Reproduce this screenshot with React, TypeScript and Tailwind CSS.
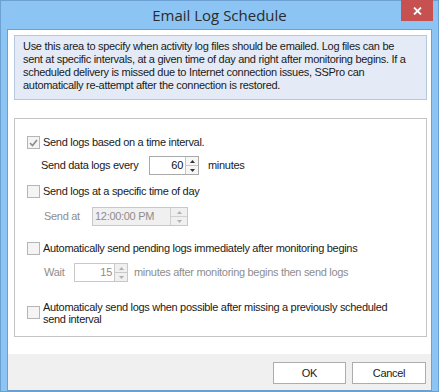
import React from "react";

const font = { fontFamily: '"Liberation Sans", Arial, sans-serif' };

function CheckBox({ checked }: { checked?: boolean }) {
  return <div className="w-[13px] h-[13px] border border-[#b5b5b5] bg-[#f4f4f4] flex items-center justify-center shrink-0">
    {checked && <svg width="9" height="8" viewBox="0 0 9 8">
      <path d="M1 4 L3.5 6.5 L8 1" fill="none" stroke="#8a8a8a" strokeWidth="1.6" />
    </svg>}
  </div>
}

function Spin({ disabled }: { disabled?: boolean }) {
  const c = disabled ? "#b0b0b0" : "#333";
  return <div className="w-[13px] h-full flex flex-col border-l border-[#c8c8c8]">
    <div className={"flex-1 flex items-center justify-center border-b border-[#c8c8c8] " + (disabled ? "bg-[#f0f0f0]" : "bg-[#f6f6f6]")}>
      <svg width="5" height="3" viewBox="0 0 5 3"><path d="M0 3 L2.5 0 L5 3Z" fill={c} /></svg>
    </div>
    <div className={"flex-1 flex items-center justify-center " + (disabled ? "bg-[#f0f0f0]" : "bg-[#f6f6f6]")}>
      <svg width="5" height="3" viewBox="0 0 5 3"><path d="M0 0 L2.5 3 L5 0Z" fill={c} /></svg>
    </div>
  </div>
}

function NumBox({ value, disabled, w }: { value: string; disabled?: boolean; w: string }) {
  return <div className={"h-[19px] flex border " + w + (disabled ? " border-[#c8c8c8] bg-white" : " border-[#a9a9a9] bg-white")}>
    <div className={"flex-1 text-right pr-[2px] leading-[17px] " + (disabled ? "text-[#8d8d8d]" : "text-[#111]")}>{value}</div>
    <Spin disabled={disabled} />
  </div>
}

export default function App() {
  return <div className="w-[439px] h-[392px] border border-[#6c9fd2] bg-[#8cc4f4] flex flex-col text-[11px] tracking-[-0.3px] text-[#1a1a1a]" style={font}>
    <div className="h-[28px] relative flex items-center justify-center">
      <span className="text-[15px] tracking-normal text-[#2b2b2b] pt-[1px]" style={{ fontFamily: '"Segoe UI", "Open Sans", sans-serif' }}>Email Log Schedule</span>
      <div className="absolute right-[5px] top-[-1px] w-[32px] h-[21px] bg-[#c75050] flex items-center justify-center">
        <svg width="9" height="8" viewBox="0 0 9 8"><path d="M1 0.5 L8 7.5 M8 0.5 L1 7.5" stroke="white" strokeWidth="1.8" /></svg>
      </div>
    </div>
    <div className="mx-[6px] flex-1 border border-[#6c9fd2] bg-white flex flex-col">
      <div className="flex-1 pl-[6px] pr-[4px] pt-[5px]">
        <div className="h-[65px] border border-[#b7c8de] bg-[#e4ebf6] pl-[8px] pt-[4px] leading-[13px] whitespace-nowrap">
          Use this area to specify when activity log files should be emailed. Log files can be<br />
          sent at specific intervals, at a given time of day and right after monitoring begins. If a<br />
          scheduled delivery is missed due to Internet connection issues, SSPro can<br />
          automatically re-attempt after the connection is restored.
        </div>
        <div className="mt-[18px] h-[219px] border border-[#c4c4c4] pl-[12px] pt-[17px] flex flex-col">
          <div className="flex items-center gap-[3px] h-[13px]">
            <CheckBox checked />
            <span>Send logs based on a time interval.</span>
          </div>
          <div className="flex items-center mt-[7px] pl-[14px] h-[19px]">
            <span className="w-[108px]">Send data logs every</span>
            <NumBox value="60" w="w-[50px]" />
            <span className="ml-[9px]">minutes</span>
          </div>
          <div className="flex items-center gap-[3px] h-[13px] mt-[10px]">
            <CheckBox />
            <span>Send logs at a specific time of day</span>
          </div>
          <div className="flex items-center mt-[9px] pl-[17px] h-[19px]">
            <span className="w-[48px] text-[#8d8d8d]">Send at</span>
            <div className="w-[96px] h-[19px] border border-[#c8c8c8] bg-[#f0f0f0] flex">
              <div className="flex-1 pl-[2px] leading-[17px] text-[#8d8d8d]">12:00:00 PM</div>
              <div className="w-[17px] flex flex-col border-l border-[#d0d0d0]">
                <div className="flex-1 flex items-center justify-center border-b border-[#d0d0d0]">
                  <svg width="5" height="3" viewBox="0 0 5 3"><path d="M0 3 L2.5 0 L5 3Z" fill="#b0b0b0" /></svg>
                </div>
                <div className="flex-1 flex items-center justify-center">
                  <svg width="5" height="3" viewBox="0 0 5 3"><path d="M0 0 L2.5 3 L5 0Z" fill="#b0b0b0" /></svg>
                </div>
              </div>
            </div>
          </div>
          <div className="flex items-center gap-[3px] h-[13px] mt-[16px]">
            <CheckBox />
            <span>Automatically send pending logs immediately after monitoring begins</span>
          </div>
          <div className="flex items-center mt-[8px] pl-[17px] h-[19px]">
            <span className="w-[30px] text-[#8d8d8d]">Wait</span>
            <NumBox value="15" disabled w="w-[54px]" />
            <span className="ml-[6px] text-[#8d8d8d]">minutes after monitoring begins then send logs</span>
          </div>
          <div className="flex items-start gap-[3px] mt-[19px]">
            <div className="pt-[5px]"><CheckBox /></div>
            <span className="leading-[12px]">Automaticaly send logs when possible after missing a previously scheduled<br />send interval</span>
          </div>
        </div>
      </div>
      <div className="h-[36px] bg-[#f0f0f0] flex items-start justify-end pt-[8px] pr-[5px] gap-[6px]">
        <button className="w-[73px] h-[22px] border border-[#adadad] bg-white text-center" style={font}>OK</button>
        <button className="w-[74px] h-[22px] border border-[#adadad] bg-white text-center" style={font}>Cancel</button>
      </div>
    </div>
  </div>
}
